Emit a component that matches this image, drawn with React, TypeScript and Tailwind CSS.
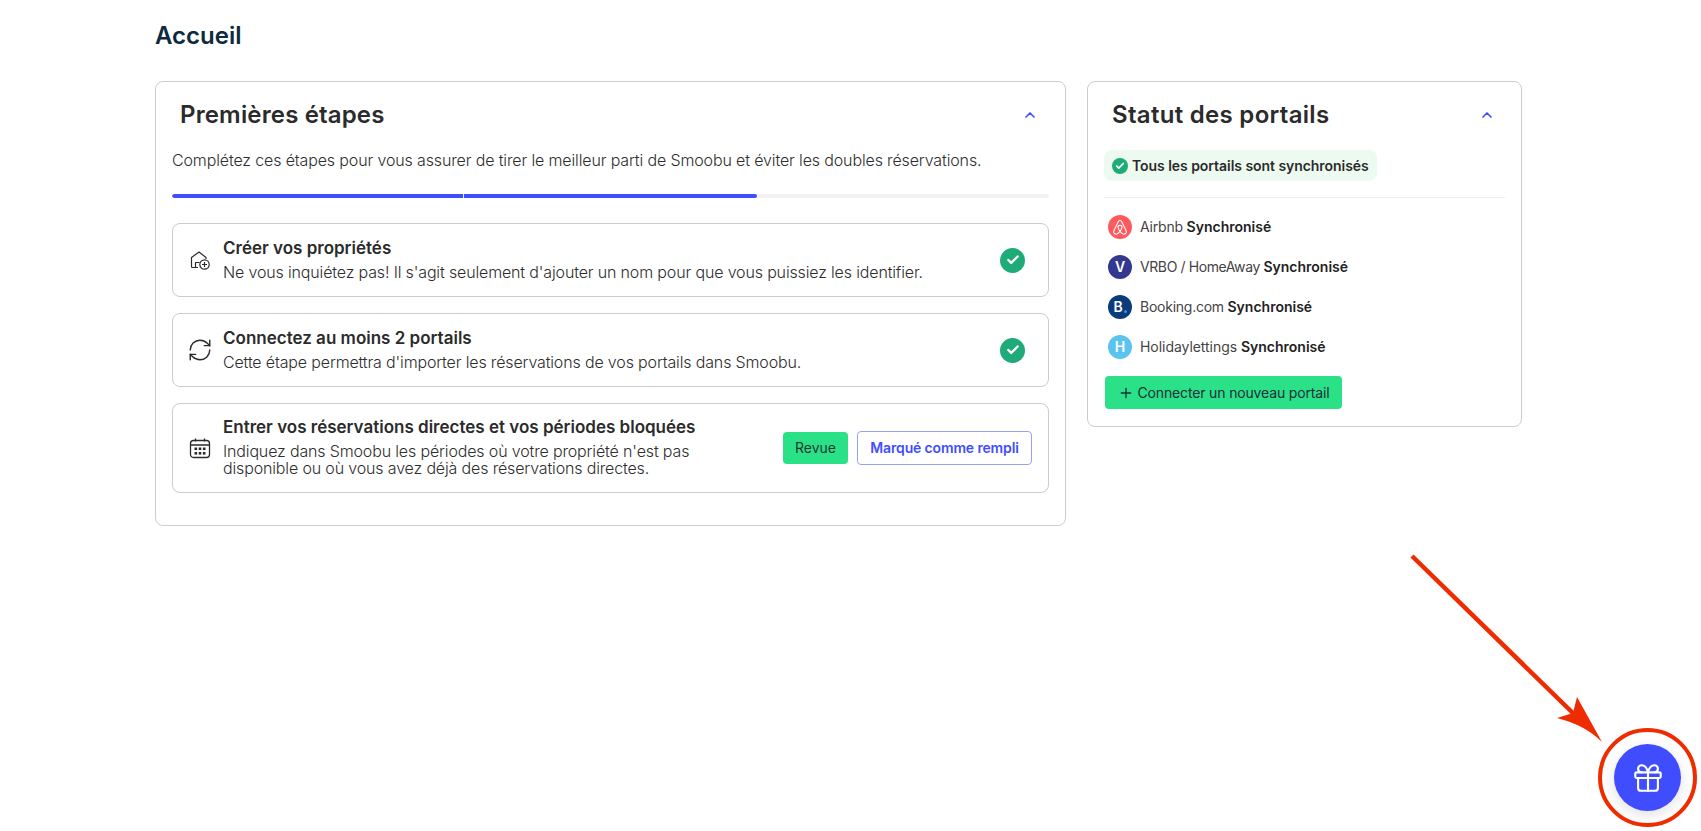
import { ChevronUp, RefreshCw, Gift, Plus, Check } from "lucide-react";

const font = "font-['Inter','Noto_Sans',sans-serif]";

function DoneIcon({ small }: { small?: boolean }) {
  return (
    <span
      className={`flex shrink-0 items-center justify-center rounded-full bg-[#1fab78] ${
        small ? "h-4 w-4" : "h-[25px] w-[25px]"
      }`}
    >
      <Check className={small ? "h-2.5 w-2.5 text-white" : "h-3.5 w-3.5 text-white"} strokeWidth={4} />
    </span>
  );
}

function HomeAddIcon() {
  return (
    <svg width="24" height="24" viewBox="0 0 22 22" fill="none" stroke="#2b2b2b" strokeWidth="1.2" strokeLinejoin="round">
      <path d="M9 18.5H3.5a1 1 0 0 1-1-1V8.5L10 3l7 5.5V10" />
      <path d="M6.5 18V13.5h4" />
      <circle cx="15.5" cy="15.5" r="4.7" />
      <path d="M15.5 13v5M13 15.5h5" />
    </svg>
  );
}

function CalendarIcon() {
  return (
    <svg width="24" height="24" viewBox="0 0 22 22" fill="none" stroke="#2b2b2b" strokeWidth="1.3">
      <rect x="1.5" y="3.5" width="19" height="17" rx="3" />
      <path d="M1.5 8h19M6.5 1.5v3M15.5 1.5v3" />
      <g fill="#2b2b2b" stroke="none">
        <rect x="5.5" y="10.5" width="2.6" height="2.6" />
        <rect x="9.7" y="10.5" width="2.6" height="2.6" />
        <rect x="13.9" y="10.5" width="2.6" height="2.6" />
        <rect x="5.5" y="15" width="2.6" height="2.6" />
        <rect x="9.7" y="15" width="2.6" height="2.6" />
        <rect x="13.9" y="15" width="2.6" height="2.6" />
      </g>
    </svg>
  );
}

function AirbnbIcon() {
  return (
    <span className="flex h-6 w-6 shrink-0 items-center justify-center rounded-full bg-[#ff5a5f]">
      <svg width="16" height="17" viewBox="0 0 16 17" fill="none" stroke="white" strokeWidth="1.1" strokeLinejoin="round">
        <path d="M8 1.5c-1 0-1.5.7-2 1.7L2 11.5c-.9 2 .2 3.7 2 3.7 1.4 0 2.7-1 4-3 1.3 2 2.6 3 4 3 1.8 0 2.9-1.7 2-3.7l-4-8.3c-.5-1-1-1.7-2-1.7Z" />
        <path d="M8 12.2C6.7 10.5 6 9.2 6 8.2 6 7 6.9 6.3 8 6.3s2 .7 2 1.9c0 1-.7 2.3-2 4Z" />
      </svg>
    </span>
  );
}

function LetterIcon({ letter, bg, dot }: { letter: string; bg: string; dot?: boolean }) {
  return (
    <span className={`flex h-6 w-6 shrink-0 items-center justify-center rounded-full text-sm font-semibold text-white ${bg}`}>
      {letter}
      {dot && <span className="mt-2 ml-px h-[3px] w-[3px] rounded-full bg-[#1d9fe0]" />}
    </span>
  );
}

function StepCard({
  icon,
  title,
  desc,
  right,
  className,
  textClass = "pb-px",
}: {
  icon: React.ReactNode;
  title: string;
  desc: React.ReactNode;
  right: React.ReactNode;
  className: string;
  textClass?: string;
}) {
  return (
    <div className={`flex items-center rounded-lg border border-[#cccccc] pl-4 ${className}`}>
      <div className="flex w-[22px] shrink-0 justify-center">{icon}</div>
      <div className={`ml-3 flex-1 ${textClass}`}>
        <div className="text-[17px] leading-5 font-semibold text-[#2b2b2b]">{title}</div>
        <div className="mt-[6px] text-base leading-[17px] font-light tracking-[-0.15px] text-[#2e2e2e]">{desc}</div>
      </div>
      {right}
    </div>
  );
}

function PortalRow({ icon, name, tracking }: { icon: React.ReactNode; name: string; tracking: string }) {
  return (
    <div className="flex h-10 items-center gap-2 pl-1 text-sm">
      {icon}
      <span className={`text-[#444444] ${tracking}`}>
        {name} <span className="font-semibold tracking-normal text-[#222222]">Synchronisé</span>
      </span>
    </div>
  );
}

export default function App() {
  return (
    <div className={`relative h-[831px] w-full overflow-hidden bg-white ${font}`}>
      <div className="ml-[155px] w-[1367px]">
        <h1 className="flex h-[81px] items-start pt-[20px] text-2xl leading-8 font-semibold text-[#0e2a3f]">Accueil</h1>

        <div className="flex items-start gap-[21px]">
          <section className="h-[445px] w-[911px] rounded-lg border border-[#cccccc] px-4">
            <div className="flex h-[64px] items-center justify-between pt-[2px] pr-[11px] pl-2">
              <h2 className="text-2xl font-semibold tracking-[0.15px] text-[#2b2b2b]">Premières étapes</h2>
              <ChevronUp className="h-4 w-4 text-[#3f4dff]" strokeWidth={2.5} />
            </div>
            <p className="mt-[2px] text-base leading-6 font-light tracking-[-0.135px] text-[#2e2e2e]">
              Complétez ces étapes pour vous assurer de tirer le meilleur parti de Smoobu et éviter les doubles réservations.
            </p>
            <div className="mt-[22px] flex h-1 gap-px overflow-hidden rounded-full bg-[#f2f2f2]">
              <div className="w-[291px] rounded-l-full bg-[#3f4dff]" />
              <div className="w-[293px] rounded-r-full bg-[#3f4dff]" />
            </div>

            <div className="mt-[25px] flex flex-col gap-4">
              <StepCard
                className="h-[74px] pr-[23px]"
                icon={<HomeAddIcon />}
                title="Créer vos propriétés"
                desc="Ne vous inquiétez pas! Il s'agit seulement d'ajouter un nom pour que vous puissiez les identifier."
                right={<DoneIcon />}
              />
              <StepCard
                className="h-[74px] pr-[23px]"
                icon={<RefreshCw className="h-[26px] w-[26px] shrink-0 text-[#2b2b2b]" strokeWidth={1.3} />}
                title="Connectez au moins 2 portails"
                desc="Cette étape permettra d'importer les réservations de vos portails dans Smoobu."
                right={<DoneIcon />}
              />
              <StepCard
                className="h-[90px] pr-[16px]"
                textClass="pb-[3px]"
                icon={<CalendarIcon />}
                title="Entrer vos réservations directes et vos périodes bloquées"
                desc={
                  <>
                    Indiquez dans Smoobu les périodes où votre propriété n'est pas
                    <br />
                    disponible ou où vous avez déjà des réservations directes.
                  </>
                }
                right={
                  <div className="flex items-center gap-[9px]">
                    <button className="h-8 w-[65px] rounded bg-[#2ae188] text-sm text-[#1f3a2d]">Revue</button>
                    <button className="h-[34px] w-[175px] rounded border border-[#9b9dfa] text-sm font-semibold tracking-[-0.15px] text-[#3f4dff]">
                      Marqué comme rempli
                    </button>
                  </div>
                }
              />
            </div>
          </section>

          <section className="h-[346px] w-[435px] rounded-lg border border-[#cccccc] px-4">
            <div className="flex h-[64px] items-center justify-between pt-[2px] pr-[10px] pl-2">
              <h2 className="text-2xl font-semibold tracking-[0.3px] text-[#2b2b2b]">Statut des portails</h2>
              <ChevronUp className="h-4 w-4 text-[#3f4dff]" strokeWidth={2.5} />
            </div>
            <div className="mt-1 flex h-[31px] w-fit items-center gap-1 rounded-lg bg-[#edfaf0] pr-2 pl-2 text-sm font-semibold tracking-[-0.05px] text-[#2b2b2b]">
              <DoneIcon small />
              Tous les portails sont synchronisés
            </div>
            <div className="mt-[16px] h-px bg-[#eeeeee]" />
            <div className="mt-[9px]">
              <PortalRow icon={<AirbnbIcon />} name="Airbnb" tracking="tracking-[-0.2px]" />
              <PortalRow icon={<LetterIcon letter="V" bg="bg-[#32398f]" />} name="VRBO / HomeAway" tracking="tracking-[-0.4px]" />
              <PortalRow icon={<LetterIcon letter="B" bg="bg-[#0c3b7c]" dot />} name="Booking.com" tracking="tracking-[-0.25px]" />
              <PortalRow icon={<LetterIcon letter="H" bg="bg-[#5bc4ee]" />} name="Holidaylettings" tracking="tracking-[-0.05px]" />
            </div>
            <button className="mt-[9px] ml-px flex h-[33px] w-[237px] items-center justify-center gap-[3px] rounded bg-[#2ae188] pl-px text-sm tracking-[-0.15px] text-[#1b2f3a]">
              <Plus className="h-4 w-4" strokeWidth={2} />
              Connecter un nouveau portail
            </button>
          </section>
        </div>
      </div>

      <button className="absolute top-[744px] left-[1614px] flex h-[67px] w-[67px] items-center justify-center rounded-full bg-[#3f4dff] shadow-[0_4px_14px_rgba(0,0,0,0.12)]">
        <Gift className="h-[34px] w-[34px] text-white" strokeWidth={1.5} />
      </button>

      {/* red annotation drawn on top of the screenshot */}
      <svg className="pointer-events-none absolute top-0 left-0" width="1701" height="831">
        <circle cx="1647.5" cy="777.5" r="47.5" fill="none" stroke="#ee2c00" strokeWidth="4" />
        <path d="M1412 556 L1578 718" stroke="#ee2c00" strokeWidth="4.5" />
        <path d="M1602 742 L1577 697 L1573 713 L1557 718 Q1585 725 1602 742 Z" fill="#ee2c00" />
      </svg>
    </div>
  );
}
